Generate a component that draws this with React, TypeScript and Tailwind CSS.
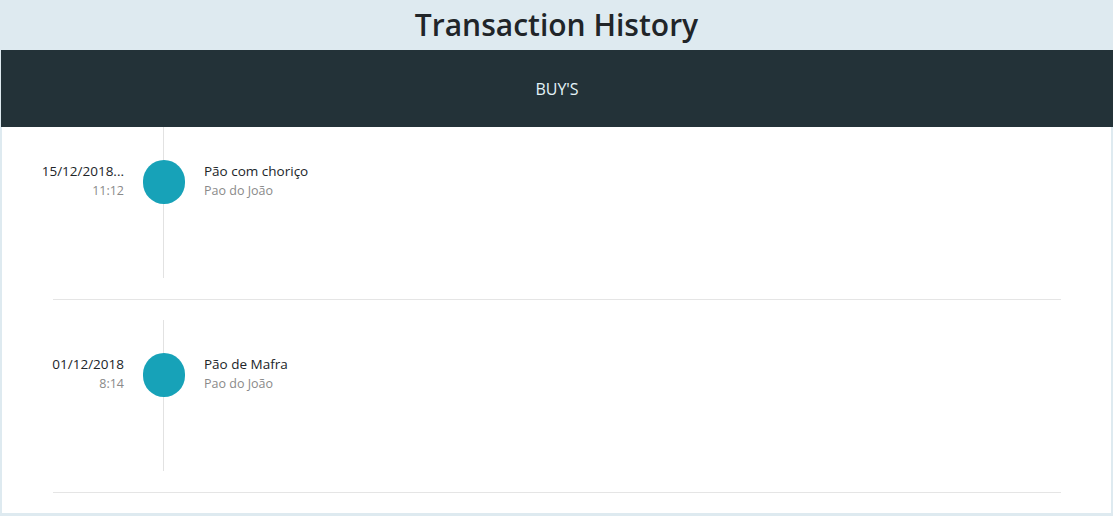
import React from "react";

type Tx = { date: string; time: string; title: string; shop: string };

const items: Tx[] = [
  { date: "15/12/2018...", time: "11:12", title: "Pão com choriço", shop: "Pao do João" },
  { date: "01/12/2018", time: "8:14", title: "Pão de Mafra", shop: "Pao do João" },
];

function Row({ tx, first }: { tx: Tx; first: boolean }) {
  return (
    <div className={first ? "" : "mt-[20px]"}>
      <div className="flex h-[151px]">
        <div className="w-[122px] flex-none pt-[35px] text-right">
          <div className="truncate text-[13.5px] leading-[19px] text-[#212529]">{tx.date}</div>
          <div className="text-[12.5px] leading-[20px] text-[#8a8a8a]">{tx.time}</div>
        </div>
        <div className="relative ml-[19px] w-[42px] flex-none">
          <div className="absolute inset-y-0 left-[20px] w-px bg-[#e2e2e2]" />
          <div className="relative mt-[33px] h-[44px] w-[42px] rounded-full bg-[#17a2b8]" />
        </div>
        <div className="ml-[19px] pt-[35px]">
          <div className="text-[13.5px] leading-[19px] text-[#212529]">{tx.title}</div>
          <div className="text-[12.5px] leading-[20px] text-[#8a8a8a]">{tx.shop}</div>
        </div>
      </div>
      <div className="mx-[51px] mt-[21px] mr-[50px] border-t border-[#e5e5e5]" />
    </div>
  );
}

export default function App() {
  return (
    <div
      className="min-h-[516px] bg-[#deeaf0] pb-[4px]"
      style={{ fontFamily: '"Open Sans", "Noto Sans", sans-serif' }}
    >
      <h1 className="h-[50px] text-center text-[30px] font-semibold leading-[50px] text-[#212529]">
        Transaction History
      </h1>
      <div className="mx-[2px] bg-white pb-[20px]">
        <div className="-ml-[1px] -mr-[2px] flex h-[77px] items-center justify-center bg-[#233238] text-[16px] text-[#e3f4f8]">
          BUY'S
        </div>
        {items.map((tx, i) => (
          <Row key={i} tx={tx} first={i === 0} />
        ))}
      </div>
    </div>
  );
}
